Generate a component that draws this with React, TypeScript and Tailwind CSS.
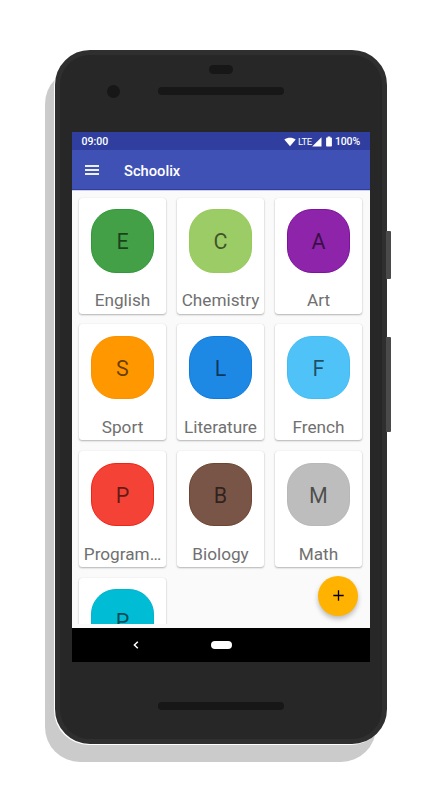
import React from 'react';

type Subject = { name?: string; letter: string; tile: string };

const subjects: Subject[] = [
  { name: 'English', letter: 'E', tile: 'bg-[#43a047] border-[#2f9a38]' },
  { name: 'Chemistry', letter: 'C', tile: 'bg-[#9ccc65] border-[#98cb5c]' },
  { name: 'Art', letter: 'A', tile: 'bg-[#8e24aa] border-[#7f10a0]' },
  { name: 'Sport', letter: 'S', tile: 'bg-[#ff9800] border-[#fb9000]' },
  { name: 'Literature', letter: 'L', tile: 'bg-[#1e88e5] border-[#107adb]' },
  { name: 'French', letter: 'F', tile: 'bg-[#4fc3f7] border-[#43bcf4]' },
  { name: 'Program…', letter: 'P', tile: 'bg-[#f44336] border-[#ee2416]' },
  { name: 'Biology', letter: 'B', tile: 'bg-[#795548] border-[#6f452f]' },
  { name: 'Math', letter: 'M', tile: 'bg-[#bdbdbd] border-[#b8b8b8]' },
  { letter: 'P', tile: 'bg-[#00bcd4] border-[#00b5cc]' },
];

function SubjectCard({ name, letter, tile }: Subject) {
  return (
    <div className="flex h-[116px] flex-col items-center rounded-[3px] bg-white pt-[11.5px] shadow-[0_1px_2px_rgba(0,0,0,0.28),0_0_1px_rgba(0,0,0,0.12)]">
      <div className={`flex size-[63.5px] shrink-0 items-center justify-center rounded-[25px] border text-[21.5px] font-normal leading-none text-black/60 ${tile}`}>
        <span className="mt-[2px]">{letter}</span>
      </div>
      {name && (
        <div className="mt-[16.5px] whitespace-nowrap text-[17.2px] font-normal leading-[22px] text-[#707070]">{name}</div>
      )}
    </div>
  );
}

function StatusBar() {
  return (
    <div className="flex h-[18px] items-center bg-[#303f9f] pl-[10px] pr-[10px] pt-[3px] text-[10.5px] font-medium leading-none text-white">
      <span>09:00</span>
      <svg className="-mt-[2px] ml-auto h-[10px] w-[12px] shrink-0" viewBox="0 0 12 10" fill="#fff">
        <path d="M0.3 2.6C3.5 0 8.5 0 11.7 2.6L6 9.3Z" />
      </svg>
      <span className="-mt-[2px] ml-[2px] text-[9.5px] font-normal tracking-[-0.3px]">LTE</span>
      <svg className="-mt-[2px] ml-[0.5px] h-[10px] w-[10px] shrink-0" viewBox="0 0 10 10" fill="#fff">
        <path d="M9.5 0.2V9.5H0.2Z" />
      </svg>
      <svg className="-mt-[2px] ml-[3.5px] h-[11px] w-[6px] shrink-0" viewBox="0 0 6 11" fill="#fff">
        <path d="M1.7 0.4h2.6v1h.9c.4 0 .7.3.7.7v7.7c0 .4-.3.7-.7.7H.8c-.4 0-.7-.3-.7-.7V2.1c0-.4.3-.7.7-.7h.9z" />
      </svg>
      <span className="ml-[3px] tracking-[-0.15px]">100%</span>
    </div>
  );
}

function AppBar() {
  return (
    <div className="flex h-10 items-center border-b border-[#303f9f] bg-[#3f51b5] pl-[13px] text-white">
      <div className="flex w-[14px] flex-col gap-[2px]">
        <div className="h-[2px] bg-white/90" />
        <div className="h-[2px] bg-white/90" />
        <div className="h-[2px] bg-white/90" />
      </div>
      <span className="ml-[25.5px] mt-[3px] text-[14.7px] font-medium leading-none">Schoolix</span>
    </div>
  );
}

export default function App() {
  return (
    <div className="relative h-[795px] w-[442px] overflow-hidden bg-white pl-[55px] pt-[50px] font-['Roboto',sans-serif]">
      <div className="absolute left-[44.5px] top-[69px] h-[693px] w-[331px] rounded-[35px] bg-[#cbcbcb]" />

      <div className="relative flex h-[693.5px] w-[331.5px] flex-col items-center rounded-[35px] border-[5.5px] border-[#2f2f2f] bg-[#272727] shadow-[-1px_1px_0_0_#fff]">
        <div className="mt-[10px] h-[9px] w-6 shrink-0 rounded-full bg-[#171717]" />
        <div className="mt-[10px] flex h-[14px] w-full shrink-0 items-center pl-[46.5px]">
          <div className="size-[13px] rounded-full bg-[#171717]" />
          <div className="ml-[38px] h-2 w-[126px] rounded-full bg-[#171717]" />
        </div>

        <div className="relative mt-[34px] flex h-[530px] w-[298.5px] shrink-0 flex-col bg-[#fafafa]">
          <StatusBar />
          <AppBar />
          <div className="h-[434px] overflow-hidden border-t border-[#cdd0e6] px-[7.5px] pt-[6.5px]">
            <div className="grid grid-cols-[87px_87px_87px] gap-x-[11px] gap-y-[10.75px]">
              {subjects.map((s, i) => (
                <SubjectCard key={i} {...s} />
              ))}
            </div>
          </div>
          <div className="mt-auto flex h-[34px] items-center bg-black">
            <svg className="ml-[61.5px] h-[8px] w-[6px]" viewBox="0 0 6 8" fill="none" stroke="#fff" strokeWidth="1.5">
              <path d="M4.8 0.7L1.4 4L4.8 7.3" />
            </svg>
            <div className="ml-[71.5px] h-[8px] w-[21px] rounded-full bg-white" />
          </div>
          <button className="absolute left-[246.5px] top-[443.5px] flex size-[40px] items-center justify-center rounded-full bg-[#ffb300] shadow-[0_3px_5px_rgba(0,0,0,0.25)]">
            <svg className="size-[11px]" viewBox="0 0 11 11" stroke="#000" strokeWidth="1.3">
              <path d="M5.5 0.3V10.7M0.3 5.5H10.7" />
            </svg>
          </button>
        </div>

        <div className="mt-[40px] h-2 w-[126px] shrink-0 rounded-full bg-[#171717]" />
      </div>

      <div className="absolute left-[386px] top-[231px] h-12 w-[5px] rounded-r-[1px] bg-[#4a4a4a]" />
      <div className="absolute left-[386px] top-[337px] h-[95px] w-[5px] rounded-r-[1px] bg-[#4a4a4a]" />
    </div>
  );
}
